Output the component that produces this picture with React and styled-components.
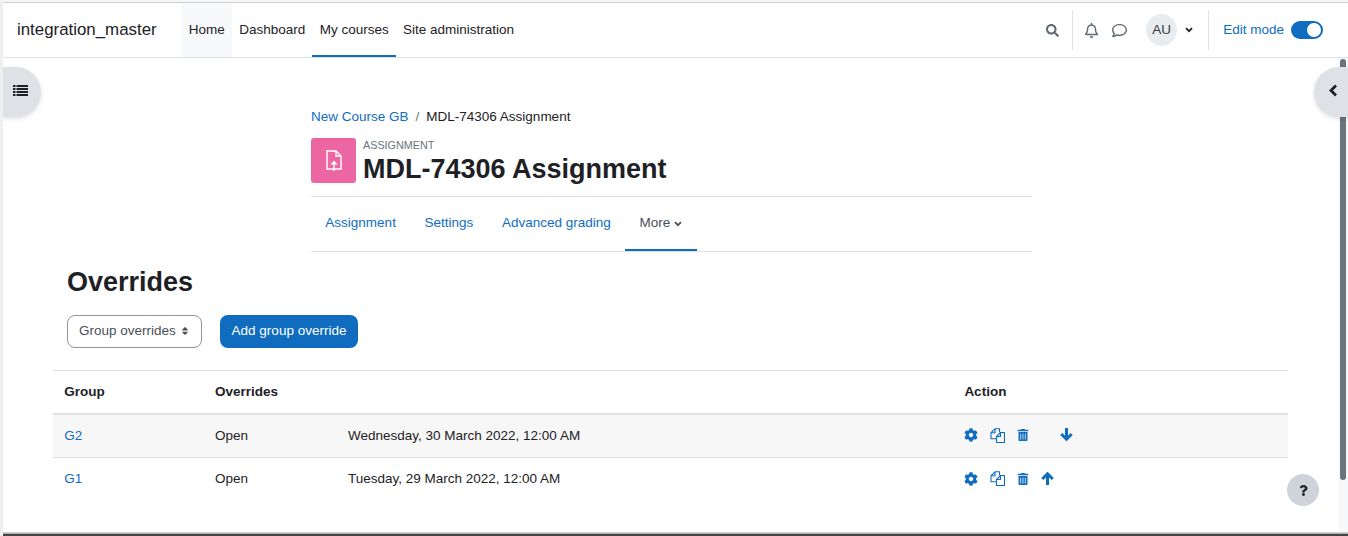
import styled, { createGlobalStyle } from "styled-components"
import { FaCog, FaTrashAlt, FaSearch, FaRegBell, FaRegComment, FaSort, FaQuestion } from "react-icons/fa"

const Global = createGlobalStyle`
  html, body { margin: 0; padding: 0; height: 536px; overflow: hidden; background: #fff; }
  body { font-family: "Liberation Sans", Arial, sans-serif; font-size: 13.5px; color: #1d2125; }
  * { box-sizing: border-box; }
`

const Page = styled.div`
  position: relative;
  width: 1348px;
  height: 536px;
  overflow: hidden;
  border-top: 2px solid #f6f6f6;
  border-left: 3px solid #efefef;
`

const BottomEdge = styled.div`
  position: absolute;
  left: 0;
  right: 0;
  bottom: 0;
  height: 4px;
  background: linear-gradient(#d2d2d2 0 1px, #b0b0b0 1px 2px, #454545 2px);
  z-index: 3;
`

const Navbar = styled.header`
  height: 56px;
  border-top: 1px solid #cfcfcf;
  border-bottom: 1px solid #dee2e6;
  display: flex;
  align-items: stretch;
  padding-left: 14px;
  padding-right: 25px;
`

const Brand = styled.div`
  font-size: 16.875px;
  line-height: 54px;
  margin-right: 25px;
`

const NavLink = styled.div`
  padding: 0 7.2px;
  line-height: 52px;
  padding-top: 1px;
  background: ${({ $hover }) => ($hover ? "#f8f9fa" : "transparent")};
  border-bottom: 2px solid ${({ $active }) => ($active ? "#0f6cbf" : "transparent")};
`

const NavRight = styled.div`
  margin-left: auto;
  display: flex;
  align-items: center;
`

const Divider = styled.span`
  width: 1px;
  height: 40px;
  background: #dee2e6;
`

const IconSlot = styled.span`
  display: flex;
  color: ${({ $color }) => $color || "#5f6b73"};
  font-size: ${({ $size }) => $size || 14}px;
  margin: ${({ $margin }) => $margin || 0};
`

const Avatar = styled.span`
  width: 31px;
  height: 32px;
  border-radius: 50%;
  background: #e9ecef;
  display: flex;
  align-items: center;
  justify-content: center;
  margin-left: 19px;
  padding-bottom: 1px;
  color: #343a40;
`

const EditLabel = styled.span`
  color: #0f6cbf;
  margin-left: 14px;
  padding-bottom: 2px;
`

const Toggle = styled.span`
  width: 32px;
  height: 18px;
  border-radius: 9px;
  background: #0f6cbf;
  margin-left: 7px;
  display: flex;
  justify-content: flex-end;
  align-items: center;
  padding-right: 2px;

  &::after {
    content: "";
    width: 14px;
    height: 14px;
    border-radius: 50%;
    background: #fff;
  }
`

const DrawerToggle = styled.div`
  position: absolute;
  top: 65px;
  ${({ $side }) =>
    $side === "left"
      ? "left: 0; border-radius: 0 25px 25px 0; width: 38px; padding-left: 10px;"
      : "right: 0; border-radius: 25px 0 0 25px; width: 34px; padding-left: 14px;"}
  height: 50px;
  background: #dee2e6;
  box-shadow: 0 2px 4px rgba(0, 0, 0, 0.12);
  display: flex;
  align-items: center;
  color: #1d2125;
  padding-bottom: 4px;
  z-index: 2;
`

const Scrollbar = styled.div`
  position: absolute;
  top: 56px;
  right: 0;
  bottom: 0;
  width: 10px;
  background: #f8f9fa;
  z-index: 1;

  &::after {
    content: "";
    position: absolute;
    left: 2px;
    top: 1px;
    width: 6px;
    height: 421px;
    border-radius: 3px;
    background: #6a737b;
  }
`

const Header = styled.section`
  width: 721px;
  margin: 0 0 0 308px;
  padding-top: 50px;
`

const Breadcrumb = styled.div`
  display: flex;
  gap: 7px;
  line-height: 17px;
`

const Link = styled.span`
  color: #0f6cbf;
`

const Crumbs = styled.span`
  color: #6a737b;
`

const TitleRow = styled.div`
  display: flex;
  gap: 7px;
  margin-top: 13px;
`

const ActivityIcon = styled.div`
  width: 45px;
  height: 45px;
  border-radius: 3px;
  background: #eb66a2;
  display: flex;
  align-items: center;
  justify-content: center;
`

const Kicker = styled.div`
  font-size: 10.8px;
  line-height: 12px;
  color: #6a737b;
  margin-top: 1px;
`

const PageTitle = styled.h1`
  margin: 2px 0 0;
  font-size: 27px;
  line-height: 32px;
  font-weight: 700;
`

const Tabs = styled.nav`
  display: flex;
  margin-top: 11px;
  height: 56px;
  border-top: 1px solid #dee2e6;
  border-bottom: 1px solid #dee2e6;
`

const Tab = styled.div`
  padding: 0 14.35px 2px;
  height: 54px;
  color: ${({ $active }) => ($active ? "#495057" : "#0f6cbf")};
  border-bottom: 2px solid ${({ $active }) => ($active ? "#0f6cbf" : "transparent")};
  display: flex;
  align-items: center;
  gap: 4px;

  svg {
    margin-top: 3px;
  }
`

const Content = styled.main`
  padding: 14px 57px 0 50px;
`

const Heading = styled.h2`
  margin: 0 0 0 14px;
  font-size: 27px;
  line-height: 32px;
  font-weight: 700;
`

const Controls = styled.div`
  display: flex;
  gap: 18px;
  margin: 17px 0 22px 14px;
`

const Select = styled.div`
  width: 135px;
  height: 33px;
  border: 1px solid #8f959e;
  border-radius: 8px;
  display: flex;
  align-items: center;
  justify-content: space-between;
  padding: 0 11px 2px;
  color: #495057;
`

const Button = styled.div`
  height: 33px;
  padding: 0 11.6px 2px;
  border-radius: 8px;
  background: #0f6cbf;
  color: #fff;
  display: flex;
  align-items: center;
`

const Table = styled.div`
  width: 1235px;
  border-top: 1px solid #dee2e6;
`

const Row = styled.div`
  display: grid;
  grid-template-columns: 150.7px 133px 616.4px 1fr;
  align-items: center;
  height: ${({ $head }) => ($head ? 44 : 43)}px;
  padding: 0 0 2px 11.3px;
  font-weight: ${({ $head }) => ($head ? 700 : 400)};
  background: ${({ $odd }) => ($odd ? "#f7f7f7" : "transparent")};
  border-bottom: ${({ $head }) => ($head ? "2px solid #dee2e6" : "1px solid #dee2e6")};
  ${({ $last }) => $last && "border-bottom: 0;"}
`

const Actions = styled.div`
  display: flex;
  align-items: center;
  color: #0f6cbf;
  font-size: 14px;
  gap: 12px;
`

const MoveIcon = styled.svg`
  display: block;
  margin-top: -1px;
  margin-left: ${({ $far }) => ($far ? 19 : 0)}px;
  transform: ${({ $up }) => ($up ? "rotate(180deg)" : "none")};
`

const HelpButton = styled.div`
  position: absolute;
  right: 29px;
  bottom: 30px;
  width: 32px;
  height: 32px;
  border-radius: 50%;
  background: #ced4da;
  display: flex;
  align-items: center;
  justify-content: center;
  font-size: 11px;
  color: #1d2125;
  z-index: 2;
`

const FileUpload = () => (
  <svg width="16" height="22" viewBox="0 0 16 22" fill="none" stroke="#fff" strokeWidth="1.4">
    <path d="M1 1h9l5 5v13H1z" />
    <path d="M10 1v5h5" />
    <path d="M8 21v-9" />
    <path d="M4.5 14.5L8 10.5l3.5 4z" fill="#fff" stroke="none" />
  </svg>
)

const ListIcon = () => (
  <svg width="15" height="11" viewBox="0 0 15 11" fill="currentColor">
    {[0, 3, 6, 9].map((y) => (
      <g key={y}>
        <rect x="0" y={y} width="2.5" height="2" />
        <rect x="3.5" y={y} width="11.5" height="2" />
      </g>
    ))}
  </svg>
)

const ChevronLeft = () => (
  <svg width="10" height="13" viewBox="0 0 10 13" fill="none" stroke="currentColor" strokeWidth="2.8">
    <path d="M8 1.5L3 6.5l5 5" />
  </svg>
)

const ChevronDown = ({ size = 8 }) => (
  <svg width={size} height={size * 0.75} viewBox="0 0 8 6" fill="none" stroke="currentColor" strokeWidth="1.8">
    <path d="M1 1.2l3 3 3-3" />
  </svg>
)

const CopyIcon = () => (
  <svg width="15" height="15" viewBox="0 0 15 15" fill="none" stroke="currentColor" strokeWidth="1.1">
    <path d="M5 .8h4.5v3.5M5 .8L1 4.8v6h5" />
    <path d="M5 .8v4H1" />
    <path d="M10.5 4.5L6.5 8.5v6h8v-10z" />
    <path d="M10.5 4.5v4h-4" />
  </svg>
)

const MoveArrow = ({ up, far }) => (
  <MoveIcon $up={up} $far={far} width="13" height="13" viewBox="0 0 13 13" fill="none" stroke="currentColor" strokeWidth="3">
    <path d="M6.5 0v11" />
    <path d="M1.3 6l5.2 5.2L11.7 6" />
  </MoveIcon>
)

const rows = [
  { group: "G2", date: "Wednesday, 30 March 2022, 12:00 AM", odd: true, down: true },
  { group: "G1", date: "Tuesday, 29 March 2022, 12:00 AM", last: true },
]

export default function App() {
  return (
    <Page>
      <Global />
      <Navbar>
        <Brand>integration_master</Brand>
        <NavLink $hover>Home</NavLink>
        <NavLink>Dashboard</NavLink>
        <NavLink $active>My courses</NavLink>
        <NavLink>Site administration</NavLink>
        <NavRight>
          <IconSlot $size={13} $margin="0 13px 0 0"><FaSearch /></IconSlot>
          <Divider />
          <IconSlot $size={15} $margin="0 13px 0 11px"><FaRegBell /></IconSlot>
          <IconSlot $size={15}><FaRegComment /></IconSlot>
          <Avatar>AU</Avatar>
          <IconSlot $color="#1d2125" $margin="0 15px 0 8px"><ChevronDown /></IconSlot>
          <Divider />
          <EditLabel>Edit mode</EditLabel>
          <Toggle />
        </NavRight>
      </Navbar>

      <DrawerToggle $side="left"><ListIcon /></DrawerToggle>
      <DrawerToggle $side="right"><ChevronLeft /></DrawerToggle>
      <Scrollbar />

      <Header>
        <Breadcrumb>
          <Link>New Course GB</Link>
          <Crumbs>/</Crumbs>
          <span>MDL-74306 Assignment</span>
        </Breadcrumb>
        <TitleRow>
          <ActivityIcon><FileUpload /></ActivityIcon>
          <div>
            <Kicker>ASSIGNMENT</Kicker>
            <PageTitle>MDL-74306 Assignment</PageTitle>
          </div>
        </TitleRow>
        <Tabs>
          <Tab>Assignment</Tab>
          <Tab>Settings</Tab>
          <Tab>Advanced grading</Tab>
          <Tab $active>More <ChevronDown /></Tab>
        </Tabs>
      </Header>

      <Content>
        <Heading>Overrides</Heading>
        <Controls>
          <Select>Group overrides <FaSort size={10} /></Select>
          <Button>Add group override</Button>
        </Controls>
        <Table>
          <Row $head>
            <span>Group</span>
            <span>Overrides</span>
            <span />
            <span>Action</span>
          </Row>
          {rows.map((r) => (
            <Row key={r.group} $odd={r.odd} $last={r.last}>
              <Link>{r.group}</Link>
              <span>Open</span>
              <span>{r.date}</span>
              <Actions>
                <FaCog />
                <CopyIcon />
                <FaTrashAlt size={12} />
                <MoveArrow up={!r.down} far={r.down} />
              </Actions>
            </Row>
          ))}
        </Table>
      </Content>

      <HelpButton><FaQuestion /></HelpButton>
      <BottomEdge />
    </Page>
  )
}
